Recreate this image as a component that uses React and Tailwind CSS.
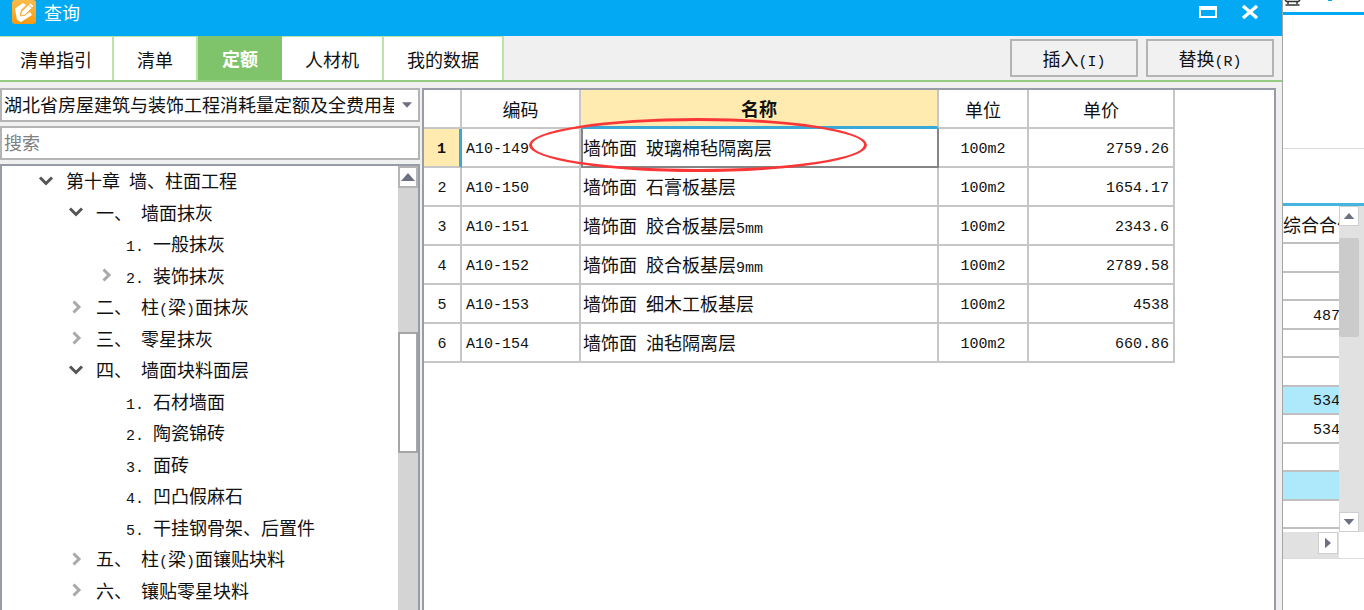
import React, { useState } from 'react';

const tabs = [
  { label: '清单指引', width: 'w-[114px]' },
  { label: '清单', width: 'w-[84px]' },
  { label: '定额', width: 'w-[84px]' },
  { label: '人材机', width: 'w-[102px]' },
  { label: '我的数据', width: 'w-[120px]' },
];

const treeNodes = [
  { text: '第十章 墙、柱面工程', level: 1, state: 'open' },
  { text: '一、 墙面抹灰', level: 2, state: 'open' },
  { text: '1. 一般抹灰', level: 3 },
  { text: '2. 装饰抹灰', level: 3, state: 'closed' },
  { text: '二、 柱(梁)面抹灰', level: 2, state: 'closed' },
  { text: '三、 零星抹灰', level: 2, state: 'closed' },
  { text: '四、 墙面块料面层', level: 2, state: 'open' },
  { text: '1. 石材墙面', level: 3 },
  { text: '2. 陶瓷锦砖', level: 3 },
  { text: '3. 面砖', level: 3 },
  { text: '4. 凹凸假麻石', level: 3 },
  { text: '5. 干挂钢骨架、后置件', level: 3 },
  { text: '五、 柱(梁)面镶贴块料', level: 2, state: 'closed' },
  { text: '六、 镶贴零星块料', level: 2, state: 'closed' },
];

const indent = { 1: 'pl-8', 2: 'pl-[62px]', 3: 'pl-[92px]' };

const rows = [
  { code: 'A10-149', name: '墙饰面 玻璃棉毡隔离层', unit: '100m2', price: '2759.26' },
  { code: 'A10-150', name: '墙饰面 石膏板基层', unit: '100m2', price: '1654.17' },
  { code: 'A10-151', name: '墙饰面 胶合板基层5mm', unit: '100m2', price: '2343.6' },
  { code: 'A10-152', name: '墙饰面 胶合板基层9mm', unit: '100m2', price: '2789.58' },
  { code: 'A10-153', name: '墙饰面 细木工板基层', unit: '100m2', price: '4538' },
  { code: 'A10-154', name: '墙饰面 油毡隔离层', unit: '100m2', price: '660.86' },
];

const totals = [
  { value: '' },
  { value: '' },
  { value: '487' },
  { value: '' },
  { value: '' },
  { value: '534', active: true },
  { value: '534' },
  { value: '' },
  { value: '', active: true },
  { value: '' },
];

// Latin runs are set smaller so that they take half the width of a Chinese character
const Mixed = ({ children }) => (
  <span className="whitespace-pre">
    {children.split(/([\x20-\x7e]+)/).map((part, i) =>
      i % 2 ? (
        <span key={i} className="text-[15px] font-['Liberation_Mono',monospace]">{part}</span>
      ) : (
        part
      )
    )}
  </span>
);

const Chevron = ({ state }) => {
  if (!state) return <span className="w-6" />;
  return (
    <svg className="w-6 h-4" viewBox="0 0 24 16" fill="none" strokeWidth="3">
      {state === 'open' ? (
        <path d="M6 3.500l6 6 6-6" stroke="#555" />
      ) : (
        <path d="M9.500 1.500l5.500 5.500-5.500 5.500" stroke="#a9a9a9" />
      )}
    </svg>
  );
};

const Triangle = ({ className }) => (
  <svg className={className} viewBox="0 0 14 8" fill="#6d7080">
    <path d="M7 0l7 8H0z" />
  </svg>
);

const AppIcon = () => (
  <svg className="w-6 h-6" viewBox="0 0 24 24">
    <defs>
      <linearGradient id="appIcon" x1="0" y1="0" x2="0" y2="1">
        <stop offset="0" stopColor="#fdbb4a" />
        <stop offset="1" stopColor="#f59a12" />
      </linearGradient>
    </defs>
    <rect width="24" height="24" rx="3" fill="url(#appIcon)" />
    <path d="M3 8.500L11 3l3 2-5 5-1 5 4 1 6-4 2 3-11 7-4-2z" fill="#fff" />
    <path d="M8.500 16l1-4.500L18.500 3l3.500 3-9 9z" fill="#fff" stroke="#f9ab35" strokeWidth=".9" />
    <path d="M16.500 5l3.500 3" stroke="#f9ab35" strokeWidth=".9" />
  </svg>
);

const cell = 'border-r-2 border-b-2 border-[#c6c6c6] font-normal p-0';

const App = () => {
  const [activeTab, setActiveTab] = useState('定额');
  const [selected, setSelected] = useState(0);

  return (
    <div className="flex h-screen overflow-hidden bg-white text-[18px] leading-6 text-[#111] font-['Noto_Sans_CJK_SC',sans-serif]">
      {/* Query window */}
      <div className="flex-1 min-w-0 flex flex-col bg-[#f0f0f0] border-r border-[#a5a5a5]">
        <header className="h-9 shrink-0 flex items-start bg-[#03a9f2] text-white pl-3 pr-[23px]">
          <AppIcon />
          <h1 className="ml-2 flex-1">查询</h1>
          <button aria-label="最大化" className="mt-1.5 w-[18px] h-3 border-2 border-t-4 border-white" />
          <button aria-label="关闭" className="ml-6 mt-1">
            <svg className="w-[18px] h-4" viewBox="0 0 18 16" stroke="#fff" strokeWidth="3.400">
              <path d="M2 2l14 12M16 2L2 14" />
            </svg>
          </button>
        </header>

        <div className="h-[46px] shrink-0 flex items-center border-b-2 border-[#93cc7f] pr-2">
          <div role="tablist" className="flex self-stretch">
            {tabs.map((tab) => (
              <button
                key={tab.label}
                role="tab"
                aria-selected={activeTab === tab.label}
                onClick={() => setActiveTab(tab.label)}
                className={`${tab.width} ${
                  activeTab === tab.label
                    ? 'bg-[#7fc36a] text-white font-bold'
                    : 'bg-white border-t border-r-2 border-[#b9e5a9]'
                }`}
              >
                {tab.label}
              </button>
            ))}
          </div>
          <div className="ml-auto flex gap-2">
            <button className="w-32 h-[38px] pt-1 border-2 border-[#b4b4b4] bg-[#f1f1f1]"><Mixed>插入(I)</Mixed></button>
            <button className="w-32 h-[38px] pt-1 border-2 border-[#b4b4b4] bg-[#f1f1f1]"><Mixed>替换(R)</Mixed></button>
          </div>
        </div>

        <div className="flex-1 min-h-0 flex gap-0.5 pt-1.5 pr-1.5">
          {/* Left side: library, search and chapter tree */}
          <aside className="w-[420px] shrink-0 flex flex-col gap-1">
            <div className="relative h-[34px] shrink-0 bg-white border-2 border-[#b4b4b4]">
              <select aria-label="定额库" className="w-full h-full appearance-none pl-0.5 pr-6 pb-0.5 outline-none">
                <option>湖北省房屋建筑与装饰工程消耗量定额及全费用基</option>
              </select>
              <Triangle className="absolute right-1.5 top-3 w-2.5 h-1.5 rotate-180 pointer-events-none" />
            </div>
            <input
              type="search"
              aria-label="搜索"
              placeholder="搜索"
              className="h-[34px] shrink-0 bg-white border-2 border-[#b4b4b4] pl-0.5 pb-0.5 outline-none placeholder:text-[#808080]"
            />
            <div className="flex-1 min-h-0 flex bg-white border-2 border-b-0 border-[#979ca6]">
              <ul className="flex-1 grid auto-rows-fr pb-[3px]">
                {treeNodes.map((node) => (
                  <li key={node.text} className={`flex items-center gap-2 ${indent[node.level]}`}>
                    <Chevron state={node.state} />
                    <div className="pt-0.5"><Mixed>{node.text}</Mixed></div>
                  </li>
                ))}
              </ul>
              <div className="w-5 flex flex-col bg-[#d4d4d4]">
                <button aria-label="向上滚动" className="h-[22px] flex items-center justify-center bg-white border-2 border-[#b4b4b4]">
                  <Triangle className="w-3.5 h-2" />
                </button>
                <div className="mt-[144px] h-[121px] bg-white border-2 border-[#a5a5a5]" />
              </div>
            </div>
          </aside>

          {/* Quota list */}
          <main className="flex-1 min-w-0 bg-white border-2 border-b-0 border-[#979ca6]">
            <table className="w-[751px] table-fixed border-separate border-spacing-0">
              <colgroup>
                <col className="w-[38px]" />
                <col className="w-[119px]" />
                <col />
                <col className="w-[90px]" />
                <col className="w-[146px]" />
              </colgroup>
              <thead>
                <tr className="h-[39px]">
                  <th className={cell} />
                  <th className={cell}>编码</th>
                  <th className="border-r-2 border-b-3 border-r-[#c6c6c6] border-b-[#38a8d6] bg-[#ffebb0] p-0 font-bold">名称</th>
                  <th className={cell}>单位</th>
                  <th className={cell}>单价</th>
                </tr>
              </thead>
              <tbody>
                {rows.map((row, i) => (
                  <tr key={row.code} className="h-[39px]" onClick={() => setSelected(i)}>
                    <th
                      className={
                        selected === i
                          ? 'border-r-3 border-b-2 border-r-[#38a8d6] border-b-[#c6c6c6] bg-[#ffebb0] p-0 font-bold'
                          : cell
                      }
                    >
                      <Mixed>{String(i + 1)}</Mixed>
                    </th>
                    <td className={`${cell} pl-1`}><Mixed>{row.code}</Mixed></td>
                    <td
                      className={
                        selected === i
                          ? 'relative border-x-2 border-b-2 border-[#858585] p-0 pt-1'
                          : `${cell} pl-0.5 pt-1`
                      }
                    >
                      <Mixed>{row.name}</Mixed>
                      {i === 0 && (
                        <span className="absolute -left-[54px] -top-[11px] w-[338px] h-[54px] rounded-[50%] border-3 border-[#fb3636] pointer-events-none" />
                      )}
                    </td>
                    <td className={`${cell} text-center`}><Mixed>{row.unit}</Mixed></td>
                    <td className={`${cell} text-right pr-1`}><Mixed>{row.price}</Mixed></td>
                  </tr>
                ))}
              </tbody>
            </table>
          </main>
        </div>
      </div>

      {/* Edge of the project window behind */}
      <div className="w-[81px] shrink-0 flex flex-col">
        <div className="h-[15px] shrink-0 flex items-start border-b-3 border-[#03a9f2]">
          <svg className="w-14 h-1.5" viewBox="0 0 56 6" fill="none">
            <path d="M2 0l1.500 1.500h12L17 0M5 1.500v2.500M14 1.500v2.500M2.500 5h14" stroke="#333" strokeWidth="1.500" />
            <path d="M45 0h4" stroke="#03a9f2" strokeWidth="2" />
          </svg>
        </div>
        <div className="h-[134px] shrink-0 border-b border-[#dcdcdc]" />
        <div className="h-[57px] shrink-0 border-b-3 border-[#45b5df]" />
        <div className="flex h-[326px] shrink-0">
          <div className="w-14 overflow-hidden">
            <table className="w-full h-[323px] table-fixed border-separate border-spacing-0">
              <thead>
                <tr className="h-[38px]">
                  <th className="border-b-2 border-[#c0c0c0] p-0 font-normal text-left whitespace-nowrap">综合合价</th>
                </tr>
              </thead>
              <tbody>
                {totals.map((total, i) => (
                  <tr key={i} className="h-7">
                    <td
                      className={`border-b-2 border-[#c0c0c0] p-0 pl-[30px] leading-4 ${
                        total.active ? 'bg-[#aee8fb]' : ''
                      }`}
                    >
                      <Mixed>{total.value}</Mixed>
                    </td>
                  </tr>
                ))}
              </tbody>
            </table>
          </div>
          <div className="flex-1 flex flex-col items-start bg-[#e1e1e1]">
            <button aria-label="向上滚动" className="w-5 h-5 flex items-center justify-center bg-white border border-[#cfcfcf]">
              <Triangle className="w-3 h-1.5" />
            </button>
            <div className="mt-3 w-5 h-[99px] rounded-xs bg-[#cbcbcb]" />
            <button aria-label="向下滚动" className="mt-auto w-5 h-5 flex items-center justify-center bg-white border border-[#cfcfcf]">
              <Triangle className="w-3 h-1.5 rotate-180" />
            </button>
          </div>
        </div>
        <div className="h-[27px] shrink-0 border-b border-[#dcdcdc]">
          <div className="w-14 h-full flex items-start justify-end pr-px bg-[#e1e1e1]">
            <button aria-label="向右滚动" className="w-5 h-[22px] flex items-center justify-center bg-white border border-[#cfcfcf]">
              <Triangle className="w-3 h-1.5 rotate-90" />
            </button>
          </div>
        </div>
      </div>
    </div>
  );
};

export default App;
